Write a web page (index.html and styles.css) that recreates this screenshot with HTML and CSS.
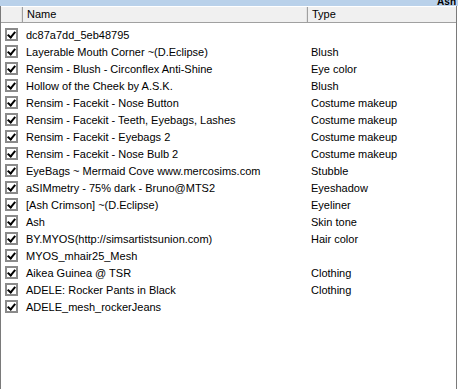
FILE: index.html
```html
<!DOCTYPE html>
<html>
<head>
<meta charset="utf-8">
<link rel="stylesheet" href="styles.css">
</head>
<body>
<div class="topbar"><span class="user">Ash</span></div>
<div class="list">
  <div class="header">
    <div class="hcell hcheck"></div>
    <div class="hcell hname">Name</div>
    <div class="hcell htype">Type</div>
  </div>
  <div class="rows">
    <div class="row"><span class="cb"></span><span class="name">dc87a7dd_5eb48795</span><span class="type"></span></div>
    <div class="row"><span class="cb"></span><span class="name">Layerable Mouth Corner ~(D.Eclipse)</span><span class="type">Blush</span></div>
    <div class="row"><span class="cb"></span><span class="name">Rensim - Blush - Circonflex Anti-Shine</span><span class="type">Eye color</span></div>
    <div class="row"><span class="cb"></span><span class="name">Hollow of the Cheek by A.S.K.</span><span class="type">Blush</span></div>
    <div class="row"><span class="cb"></span><span class="name">Rensim - Facekit - Nose Button</span><span class="type">Costume makeup</span></div>
    <div class="row"><span class="cb"></span><span class="name">Rensim - Facekit - Teeth, Eyebags, Lashes</span><span class="type">Costume makeup</span></div>
    <div class="row"><span class="cb"></span><span class="name">Rensim - Facekit - Eyebags 2</span><span class="type">Costume makeup</span></div>
    <div class="row"><span class="cb"></span><span class="name">Rensim - Facekit - Nose Bulb 2</span><span class="type">Costume makeup</span></div>
    <div class="row"><span class="cb"></span><span class="name">EyeBags ~ Mermaid Cove www.mercosims.com</span><span class="type">Stubble</span></div>
    <div class="row"><span class="cb"></span><span class="name">aSIMmetry - 75% dark - Bruno@MTS2</span><span class="type">Eyeshadow</span></div>
    <div class="row"><span class="cb"></span><span class="name">[Ash Crimson] ~(D.Eclipse)</span><span class="type">Eyeliner</span></div>
    <div class="row"><span class="cb"></span><span class="name">Ash</span><span class="type">Skin tone</span></div>
    <div class="row"><span class="cb"></span><span class="name">BY.MYOS(http://simsartistsunion.com)</span><span class="type">Hair color</span></div>
    <div class="row"><span class="cb"></span><span class="name">MYOS_mhair25_Mesh</span><span class="type"></span></div>
    <div class="row"><span class="cb"></span><span class="name">Aikea Guinea @ TSR</span><span class="type">Clothing</span></div>
    <div class="row"><span class="cb"></span><span class="name">ADELE: Rocker Pants in Black</span><span class="type">Clothing</span></div>
    <div class="row"><span class="cb"></span><span class="name">ADELE_mesh_rockerJeans</span><span class="type"></span></div>
  </div>
</div>
</body>
</html>
```
FILE: styles.css
```css
html, body {
  margin: 0;
  padding: 0;
  background: #ffffff;
}
body {
  width: 458px;
  height: 389px;
  overflow: hidden;
  font-family: "Liberation Sans", Arial, sans-serif;
  font-size: 11px;
  color: #000;
}
.topbar {
  height: 6px;
  background: #b9d1ea;
  overflow: hidden;
  display: flex;
  justify-content: flex-end;
}
.user {
  font-size: 10px;
  font-weight: bold;
  line-height: 10px;
  margin-top: -3px;
  padding-right: 2px;
  color: #000;
}
.list {
  width: 455px;
  height: 383px;
  border-left: 1px solid #7a7a7a;
  border-right: 1px solid #7a7a7a;
  background: #fff;
}
.header {
  display: flex;
  height: 15px;
  background: #f0f0f0;
  border-top: 1px solid #ffffff;
  border-bottom: 1px solid #a0a0a0;
}
.hcell {
  height: 15px;
  line-height: 15px;
  box-sizing: border-box;
  border-right: 1px solid #a0a0a0;
  box-shadow: inset -1px 0 0 #e3e3e3;
}
.hcheck { width: 22px; }
.hname { width: 285px; padding-left: 4px; }
.htype { flex: 1; padding-left: 4px; border-right: none; box-shadow: none; }
.rows {
  padding-top: 3px;
}
.row {
  display: flex;
  align-items: center;
  height: 17px;
}
.cb {
  width: 9px;
  height: 9px;
  margin-left: 4px;
  border: 2px solid #8a8a8a;
  background: #fff;
  position: relative;
  flex: none;
}
.cb::after {
  content: "";
  position: absolute;
  left: 2px;
  top: 0px;
  width: 3px;
  height: 6px;
  border-right: 2px solid #000;
  border-bottom: 2px solid #000;
  transform: rotate(40deg);
}
.name {
  width: 285px;
  padding-left: 8px;
  white-space: nowrap;
}
.type {
  padding-left: 0;
  white-space: nowrap;
}
```
